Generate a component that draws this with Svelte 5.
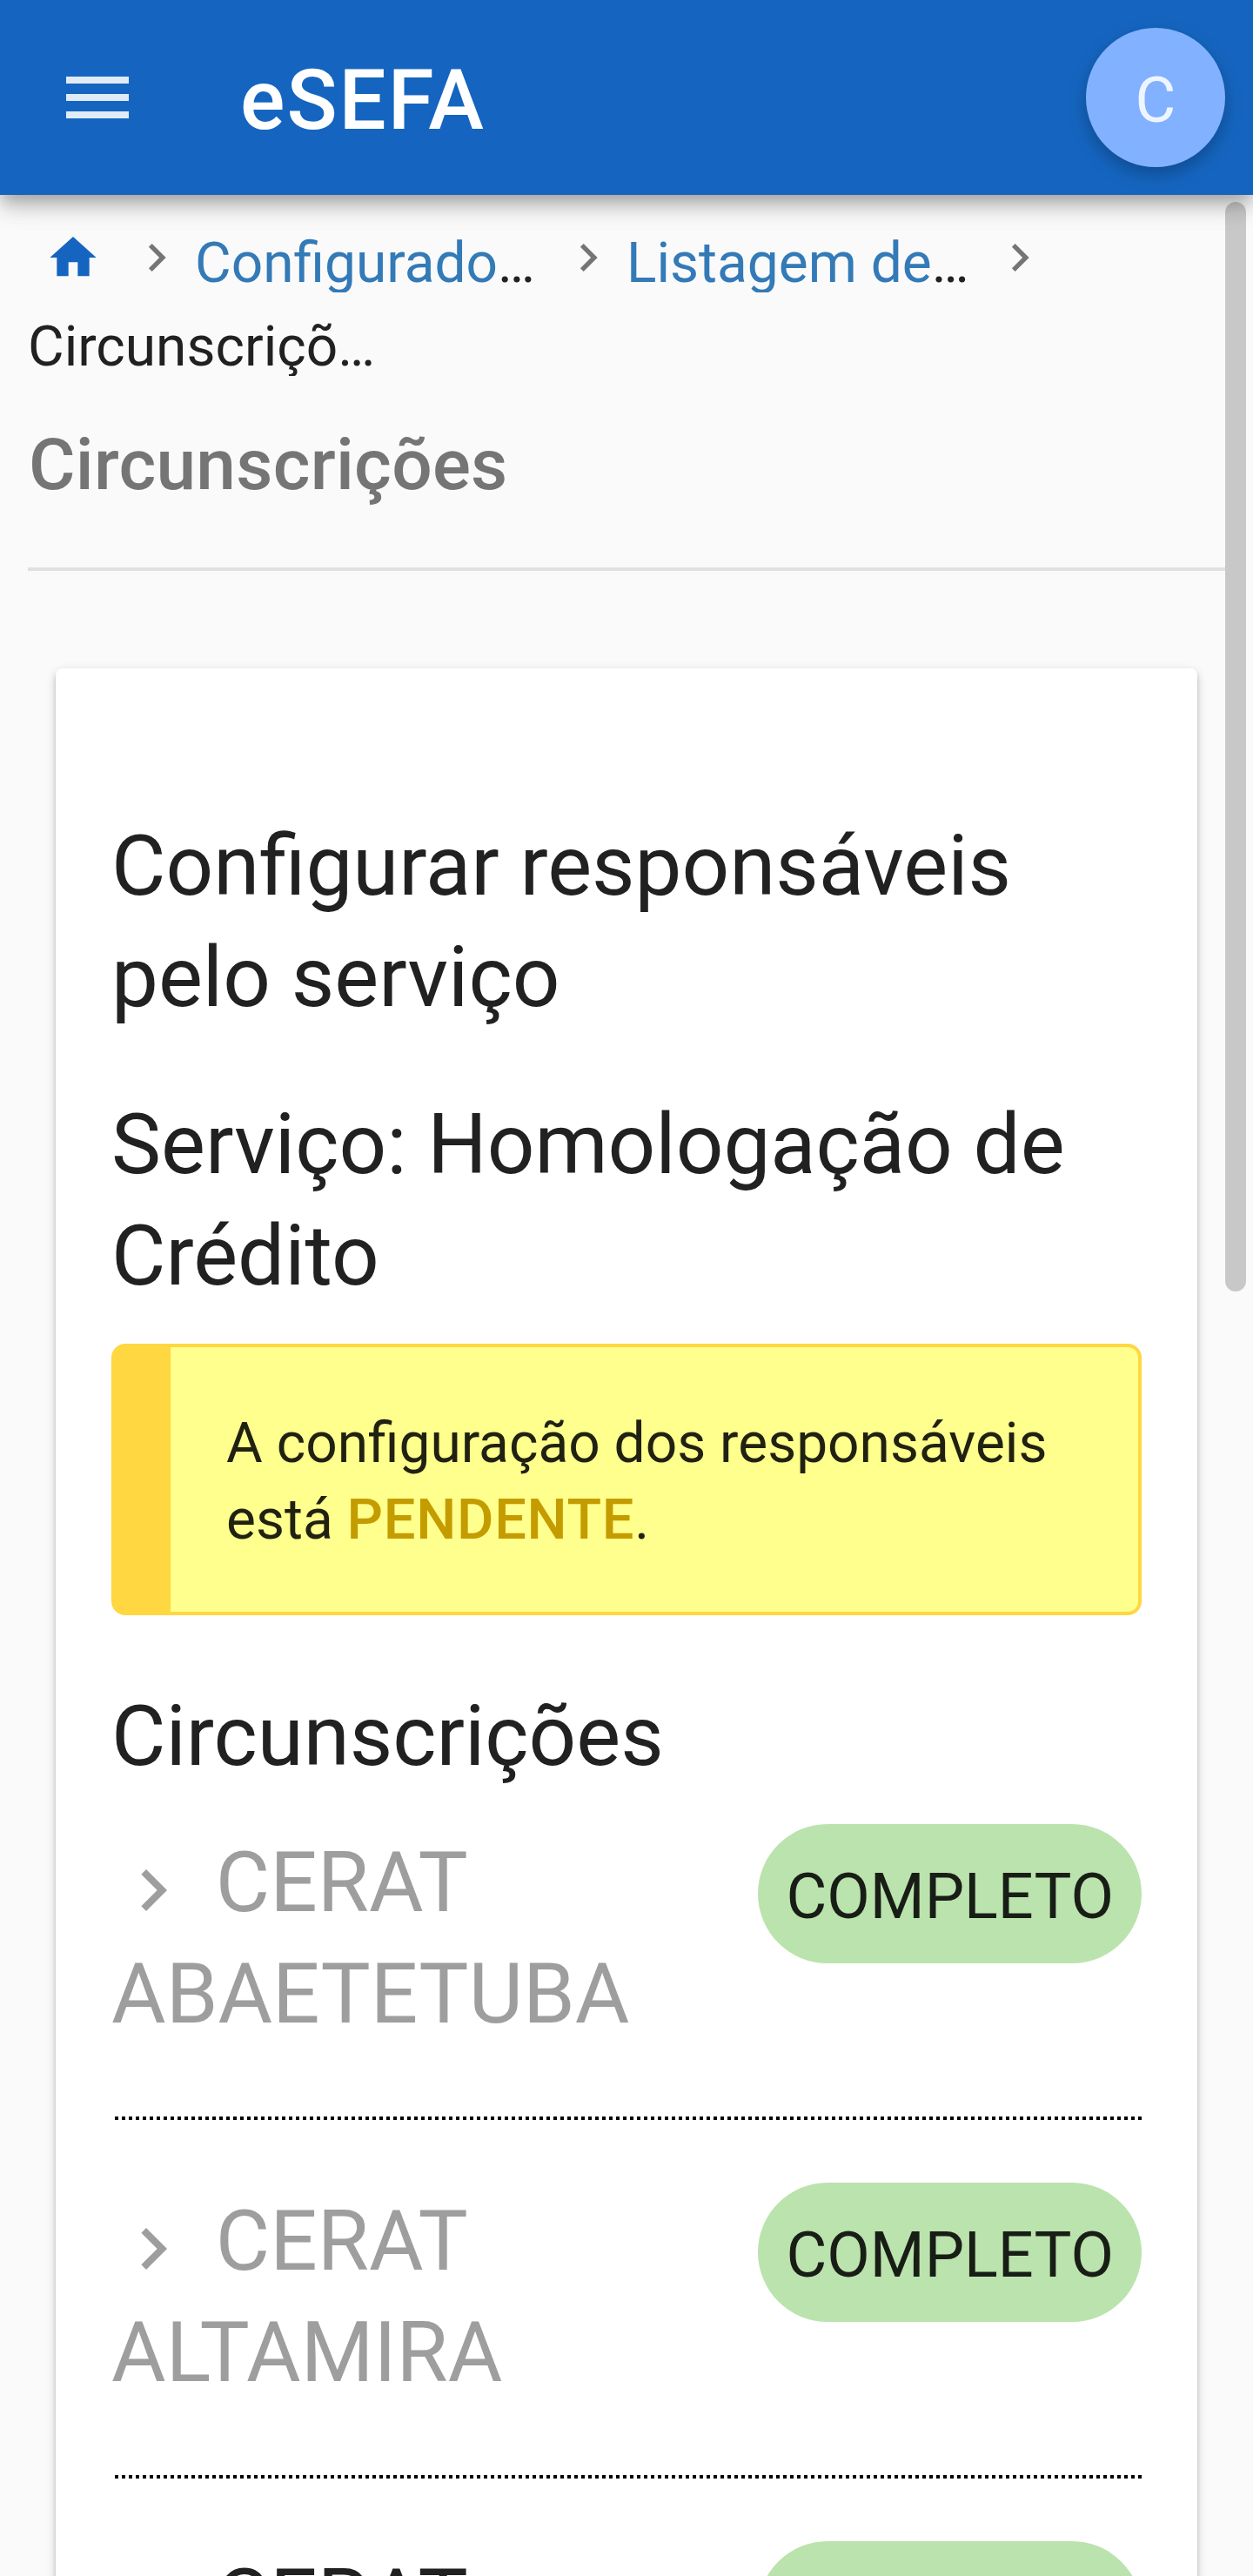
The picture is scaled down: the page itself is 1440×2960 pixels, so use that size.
<script>
  const crumbs = ['Configurado', 'Listagem de'];
  const districts = [
    { name: 'CERAT ABAETETUBA', status: 'COMPLETO', muted: true },
    { name: 'CERAT ALTAMIRA', status: 'COMPLETO', muted: true },
    { name: 'CERAT', status: 'COMPLETO', muted: false }
  ];
</script>

{#snippet chevron()}
  <svg class="chevron" viewBox="0 0 24 24" aria-hidden="true">
    <path d="M10 6L8.59 7.41 13.17 12l-4.58 4.59L10 18l6-6z" fill="currentColor" />
  </svg>
{/snippet}

<div class="screen">
  <header class="toolbar">
    <svg class="menu" viewBox="0 0 24 24" aria-hidden="true">
      <path d="M3 18h18v-2H3v2zm0-5h18v-2H3v2zm0-7v2h18V6H3z" fill="currentColor" />
    </svg>
    <span class="brand">eSEFA</span>
    <span class="avatar">C</span>
  </header>

  <main>
    <nav class="crumbs">
      <svg class="home" viewBox="0 0 24 24" aria-hidden="true">
        <path d="M10 20v-6h4v6h5v-8h3L12 3 2 12h3v8z" fill="currentColor" />
      </svg>
      {#each crumbs as crumb}
        {@render chevron()}
        <span class="crumb"><span class="link">{crumb}</span>…</span>
      {/each}
      {@render chevron()}
      <span class="crumb">Circunscriçõ…</span>
    </nav>

    <h1>Circunscrições</h1>

    <section class="card">
      <h2>Configurar responsáveis pelo serviço</h2>
      <h2>Serviço: Homologação de Crédito</h2>
      <p class="notice">A configuração dos responsáveis está <strong>PENDENTE</strong>.</p>
      <h2 class="list-title">Circunscrições</h2>
      {#each districts as district}
        <div class="row">
          <span class="name" class:muted={district.muted}>{@render chevron()} {district.name}</span>
          <span class="pill">{district.status}</span>
        </div>
        <div class="dots"></div>
      {/each}
    </section>
  </main>

  <div class="scrollbar"></div>
</div>

<style>
  :global(body) {
    background: #fafafa;
  }

  .screen {
    position: relative;
    display: flex;
    flex-direction: column;
    width: 1440px;
    height: 2960px;
    overflow: hidden;
    box-sizing: border-box;
    background: #fafafa;
    color: #212121;
    font-family: Roboto, sans-serif;
    font-size: 64px;
  }

  .toolbar {
    position: relative;
    z-index: 2;
    display: flex;
    align-items: center;
    flex: none;
    box-sizing: border-box;
    height: 224px;
    padding: 0 32px 0 64px;
    background: #1565c0;
    color: rgba(255, 255, 255, 0.87);
    box-shadow:
      0 8px 16px -4px rgba(0, 0, 0, 0.2),
      0 16px 20px 0 rgba(0, 0, 0, 0.14),
      0 4px 40px 0 rgba(0, 0, 0, 0.12);
  }

  .menu {
    width: 96px;
    height: 96px;
  }

  .brand {
    margin-left: 116px;
    padding-top: 6px;
    color: #fff;
    font-size: 96px;
    font-weight: 500;
    letter-spacing: 2px;
    line-height: 112px;
  }

  .avatar {
    width: 160px;
    height: 160px;
    margin-left: auto;
    border-radius: 50%;
    background: #82b1ff;
    box-shadow: 0 8px 20px 0 rgba(0, 0, 0, 0.26);
    font-size: 72px;
    line-height: 168px;
    text-align: center;
  }

  main {
    flex: 1;
    min-height: 0;
    padding: 40px 32px 0;
  }

  .crumbs {
    display: flex;
    flex-wrap: wrap;
    align-items: flex-start;
    height: 168px;
  }

  .home {
    width: 64px;
    height: 64px;
    margin: 0 32px 0 20px;
    color: #1565c0;
  }

  .crumbs .chevron {
    width: 64px;
    height: 64px;
    margin-right: 12px;
    color: #757575;
  }

  .crumb {
    width: 400px;
    height: 68px;
    margin: 4px 20px 24px 0;
    overflow: hidden;
    line-height: 70px;
    white-space: nowrap;
  }

  .link {
    color: #337ab7;
  }

  h1 {
    margin: 0 0 112px;
    padding: 53px 0 69px 1px;
    border-bottom: 4px solid #e0e0e0;
    color: #757575;
    font-size: 82px;
    font-weight: 500;
    letter-spacing: 0.25px;
    line-height: 98px;
  }

  .card {
    height: 2400px;
    margin: 0 32px;
    padding: 163px 64px 0;
    box-sizing: border-box;
    border-radius: 8px;
    background: #fff;
    box-shadow:
      0 4px 12px 0 rgba(0, 0, 0, 0.2),
      0 4px 4px 0 rgba(0, 0, 0, 0.14),
      0 8px 4px -4px rgba(0, 0, 0, 0.12);
  }

  h2 {
    margin: 0 0 64px;
    font-size: 96px;
    font-weight: 400;
    line-height: 128px;
  }

  .notice {
    box-sizing: border-box;
    height: 312px;
    margin: -27px 0 75px;
    padding: 67px 64px;
    border: 4px solid #ffd740;
    border-left-width: 68px;
    border-radius: 16px;
    background: #ffff8d;
    color: rgba(0, 0, 0, 0.87);
    line-height: 88px;
  }

  .notice strong {
    color: #c49c00;
    font-size: 65px;
    font-weight: 500;
    letter-spacing: 0.7px;
    line-height: 1;
  }

  .list-title {
    margin-bottom: 37px;
  }

  .row {
    display: flex;
    align-items: flex-start;
    justify-content: space-between;
    height: 336px;
  }

  .name {
    width: 700px;
    padding-top: 3px;
    font-size: 96px;
    line-height: 128px;
  }

  .muted {
    color: #9e9e9e;
  }

  .name .chevron {
    width: 96px;
    height: 96px;
    vertical-align: -24px;
  }

  .pill {
    height: 160px;
    padding: 0 32px;
    border-radius: 80px;
    background: #bbe3ad;
    color: rgba(0, 0, 0, 0.87);
    font-size: 72px;
    line-height: 168px;
  }

  .dots {
    height: 4px;
    margin: 0 0 72px 4px;
    background: repeating-linear-gradient(90deg, #000 0 4px, transparent 4px 8px);
  }

  .scrollbar {
    position: absolute;
    z-index: 1;
    top: 232px;
    right: 8px;
    width: 24px;
    height: 1252px;
    border-radius: 12px;
    background: #c8c8c8;
  }
</style>
